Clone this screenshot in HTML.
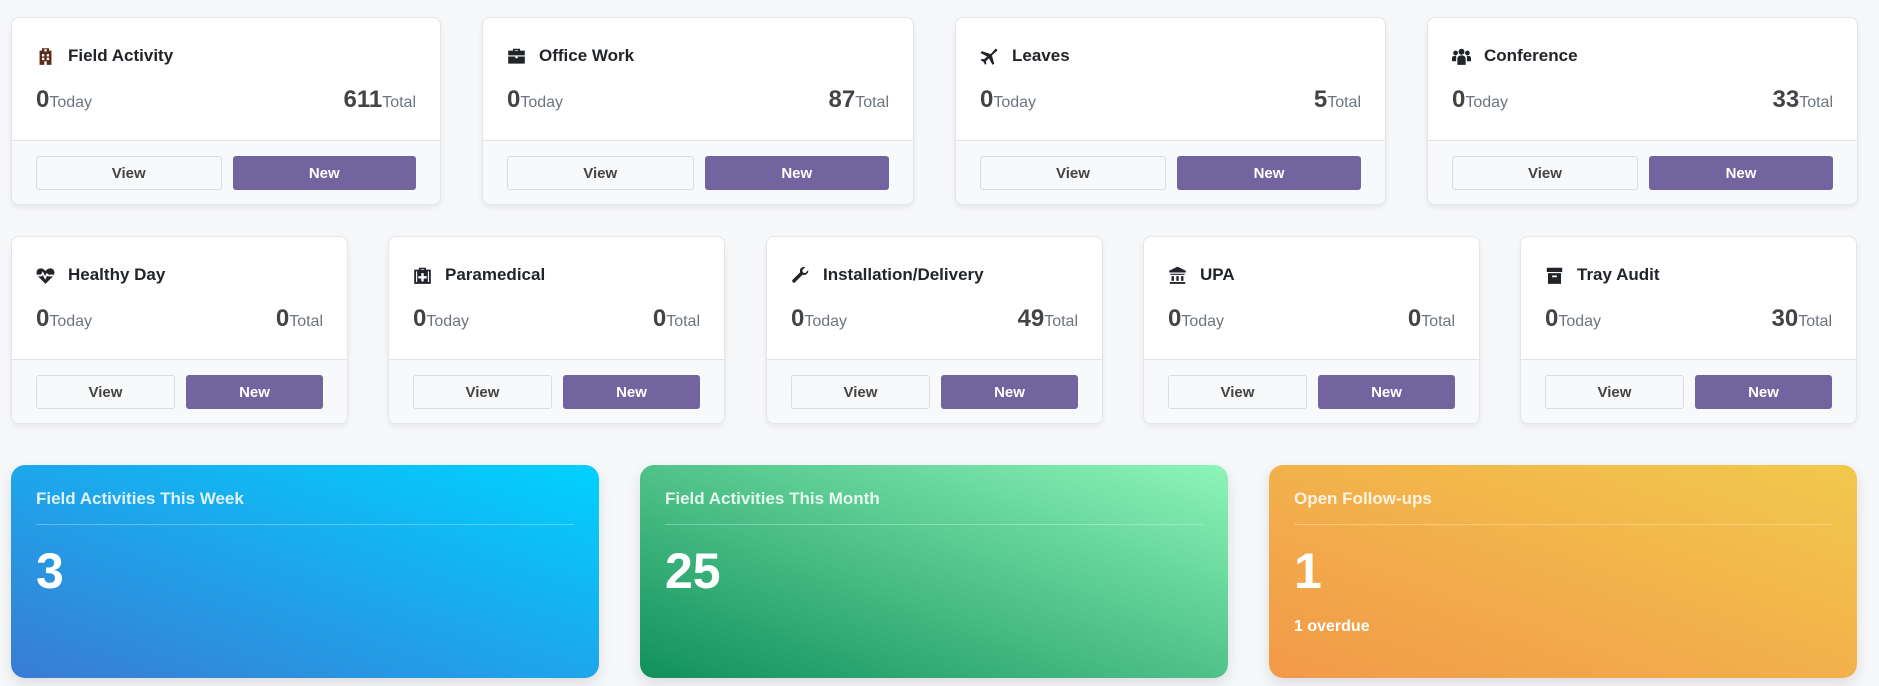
<!DOCTYPE html>
<html><head><meta charset="utf-8"><style>
*{box-sizing:border-box;margin:0;padding:0}
body{width:1879px;height:686px;background:#f6f7f9;font-family:"Liberation Sans",sans-serif;position:relative;overflow:hidden}
.card{position:absolute;background:#fff;border:1px solid #e3e5e8;border-radius:8px;box-shadow:0 3px 6px rgba(0,0,0,.06);overflow:hidden;height:188px}
.hd{height:123px;position:relative;border-bottom:1px solid #e1e3e6}
.t{position:absolute;left:24px;top:27px;font-size:17px;font-weight:600;color:#212529;display:flex;align-items:center;height:22px}
.t svg{width:19px;height:19px;margin-right:13px;fill:#212529}
.n{position:absolute;top:68px;font-size:24px;font-weight:600;color:#444}
.n small{font-size:16px;font-weight:400;color:#6c757d}
.l{left:24px}.r{right:24px}
.ft{background:#f8f9fa;height:65px;display:flex;padding:15px 24px 0;gap:11px}
.b{flex:1;height:34px;border-radius:3px;font-size:15px;font-weight:600;display:flex;align-items:center;justify-content:center}
.v{background:#f8f9fa;border:1px solid #dadde1;color:#444}
.w{background:#72649e;color:#fff}
.big{position:absolute;top:465px;width:588px;height:213px;border-radius:14px;color:#fff;padding:24px 25px;box-shadow:0 6px 14px rgba(0,0,0,.1)}
.big h3{font-size:17px;font-weight:600;color:rgba(255,255,255,.85);height:36px;border-bottom:1px solid rgba(255,255,255,.3)}
.big .num{font-size:50px;font-weight:700;margin-top:16px;line-height:60px}
.big .od{font-size:16px;font-weight:600;margin-top:17px}
</style></head><body>

<div class="card" style="left:11px;top:17px;width:430px"><div class="hd"><div class="t"><svg viewBox="0 0 16 16"><path d="M5 1h6v2h2v12H3V3h2zM7 1.8v2h2v-2zM5 6h2v2H5zm4 0h2v2H9zM5 9h2v2H5zm4 0h2v2H9zM7 12h2v3H7z" fill-rule="evenodd" fill="#5a2a1a"/></svg>Field Activity</div><div class="n l">0<small>Today</small></div><div class="n r">611<small>Total</small></div></div><div class="ft"><div class="b v">View</div><div class="b w">New</div></div></div>
<div class="card" style="left:482px;top:17px;width:432px"><div class="hd"><div class="t"><svg viewBox="0 0 16 16"><path d="M5 3V1.5h6V3h4v4H1V3zm1.5 0h3V2.5h-3zM1 8h6v1.5h2V8h6v6H1z"/></svg>Office Work</div><div class="n l">0<small>Today</small></div><div class="n r">87<small>Total</small></div></div><div class="ft"><div class="b v">View</div><div class="b w">New</div></div></div>
<div class="card" style="left:955px;top:17px;width:431px"><div class="hd"><div class="t"><svg viewBox="0 0 16 16"><path d="M13 1.5c1 0 1.5.5 1.5 1.5L10 7l2 7-1.5 1-3-5.5L5 12l.3 2-1 1-1.3-2.5L.5 11l1-1 2 .3L6 8 .5 5 1.5 3.5 9 6z"/></svg>Leaves</div><div class="n l">0<small>Today</small></div><div class="n r">5<small>Total</small></div></div><div class="ft"><div class="b v">View</div><div class="b w">New</div></div></div>
<div class="card" style="left:1427px;top:17px;width:431px"><div class="hd"><div class="t"><svg viewBox="0 0 16 16"><circle cx="8" cy="4" r="2.5"/><circle cx="3" cy="5" r="2"/><circle cx="13" cy="5" r="2"/><path d="M4.5 15V10c0-2 1.5-3 3.5-3s3.5 1 3.5 3v5zM0 12V9.5C0 8 1 7.5 2.5 7.5h1L3.5 12zM16 12V9.5c0-1.5-1-2-2.5-2h-1l.1 4.5z"/></svg>Conference</div><div class="n l">0<small>Today</small></div><div class="n r">33<small>Total</small></div></div><div class="ft"><div class="b v">View</div><div class="b w">New</div></div></div>

<div class="card" style="left:11px;top:236px;width:337px"><div class="hd"><div class="t"><svg viewBox="0 0 16 16"><path d="M8 15L1.5 8.5C-.5 6 .5 2 4 2c2 0 3 1.2 4 2.3C9 3.2 10 2 12 2c3.5 0 4.5 4 2.5 6.5z"/><path d="M1 8h3.5l1.2-2 2 4 1.5-3 1 1H15" stroke="#fff" stroke-width="1.4" fill="none"/></svg>Healthy Day</div><div class="n l">0<small>Today</small></div><div class="n r">0<small>Total</small></div></div><div class="ft"><div class="b v">View</div><div class="b w">New</div></div></div>
<div class="card" style="left:388px;top:236px;width:337px"><div class="hd"><div class="t"><svg viewBox="0 0 16 16"><path d="M5 3V1.5h6V3h4v12H1V3zm1.5 0h3v-.5h-3zM7 6v2.5H4.5v2H7V13h2v-2.5h2.5v-2H9V6zM2.5 4.5v9h1v-9zm10 0v9h1v-9z" fill-rule="evenodd"/></svg>Paramedical</div><div class="n l">0<small>Today</small></div><div class="n r">0<small>Total</small></div></div><div class="ft"><div class="b v">View</div><div class="b w">New</div></div></div>
<div class="card" style="left:766px;top:236px;width:337px"><div class="hd"><div class="t"><svg viewBox="0 0 16 16"><path d="M14.5 3.5l-2.5 2.5-2-.5-.5-2L12 1c-2-.7-4.5.5-4.5 3 0 .5.1.9.2 1.3L1.2 11.8a1.5 1.5 0 002 2.1l6.5-6.5c.4.1.8.2 1.3.2 2.5 0 3.8-2.3 3.5-4.1z"/></svg>Installation/Delivery</div><div class="n l">0<small>Today</small></div><div class="n r">49<small>Total</small></div></div><div class="ft"><div class="b v">View</div><div class="b w">New</div></div></div>
<div class="card" style="left:1143px;top:236px;width:337px"><div class="hd"><div class="t"><svg viewBox="0 0 16 16"><path d="M8 .5L15 4v1.5H1V4zM2 6.5h12v1H2zM3 8.5h2v4H3zm4 0h2v4H7zm4 0h2v4h-2zM1.5 13.5h13V15h-13z"/></svg>UPA</div><div class="n l">0<small>Today</small></div><div class="n r">0<small>Total</small></div></div><div class="ft"><div class="b v">View</div><div class="b w">New</div></div></div>
<div class="card" style="left:1520px;top:236px;width:337px"><div class="hd"><div class="t"><svg viewBox="0 0 16 16"><path d="M1.5 1.5h13V5h-13zM2.5 6h11v9h-11zM6 8v1.5h4V8z" fill-rule="evenodd"/></svg>Tray Audit</div><div class="n l">0<small>Today</small></div><div class="n r">30<small>Total</small></div></div><div class="ft"><div class="b v">View</div><div class="b w">New</div></div></div>

<div class="big" style="left:11px;background:linear-gradient(to top right,#3a7bd5,#00d2ff)"><h3>Field Activities This Week</h3><div class="num">3</div></div>
<div class="big" style="left:640px;background:linear-gradient(to top right,#11905c,#8ef5b8)"><h3>Field Activities This Month</h3><div class="num">25</div></div>
<div class="big" style="left:1269px;background:linear-gradient(to top right,#f2994a,#f2c94c)"><h3>Open Follow-ups</h3><div class="num">1</div><div class="od">1 overdue</div></div>
</body></html>
